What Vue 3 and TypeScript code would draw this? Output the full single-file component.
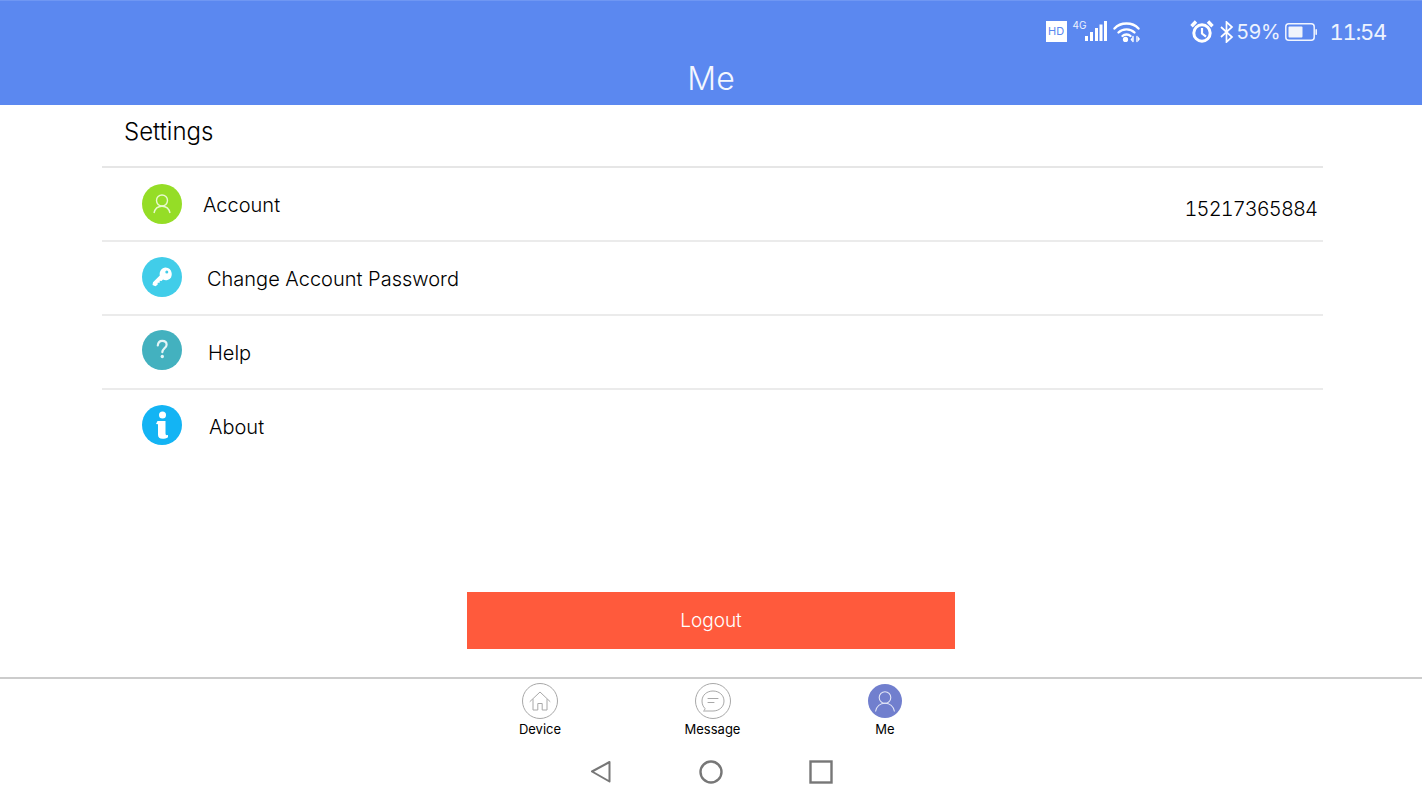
<script setup lang="ts">
interface Row { key: string; label: string; value?: string; color: string; inset: number; lift: number }
const rows: Row[] = [
  { key: 'account', label: 'Account', value: '15217365884', color: '#95dd26', inset: 21, lift: 0 },
  { key: 'password', label: 'Change Account Password', color: '#41cde9', inset: 25, lift: 3 },
  { key: 'help', label: 'Help', color: '#43b1bf', inset: 26, lift: 5 },
  { key: 'about', label: 'About', color: '#13b4f4', inset: 27, lift: 2 },
]
</script>

<template>
  <div class="page">
    <header class="top">
      <div class="status">
        <span class="hd">HD</span>
        <span class="net">4G</span>
        <svg class="signal" width="22" height="21" viewBox="0 0 22 21" fill="#fff">
          <rect x="0" y="15" width="3" height="5" /><rect x="5" y="11" width="3" height="9" />
          <rect x="10" y="7" width="3" height="13" /><rect x="14.500" y="3.500" width="3" height="16.500" />
          <rect x="19" y="0" width="3" height="20" />
        </svg>
        <svg class="wifi" width="28" height="22" viewBox="0 0 28 22" fill="none" stroke="#fff" stroke-width="2.400" stroke-linecap="round">
          <path d="M1.500 7.500C7.500 .8 19.500 .8 25.500 7.500" />
          <path d="M5.500 11.500C9.500 7.300 17.500 7.300 21.500 11.500" />
          <path d="M9.500 15C11.500 13 15.500 13 17.500 15" />
          <circle cx="12.500" cy="18.400" r="2.600" fill="#fff" stroke="none" />
          <path d="M20 15.500v5M24 15.500v5" stroke-width="1.400" />
          <path d="M17.500 18.500l2-2.400v4.800zM27 18l-2-2.400v4.800z" fill="#fff" stroke="none" />
        </svg>
        <svg class="alarm" width="24" height="23" viewBox="0 0 24 23" fill="none" stroke="#fff" stroke-width="3">
          <circle cx="12" cy="13" r="8.200" />
          <path d="M12 8v5.500l4 3.200" stroke-width="2.200" />
          <path d="M1.500 6.200 6 1.500M22.500 6.200 18 1.500" stroke-width="3.400" />
        </svg>
        <svg class="bt" width="14" height="22" viewBox="0 0 14 22" fill="none" stroke="#fff" stroke-width="1.700">
          <path d="M1 6 12 16 6.500 21V1L12 6 1 16" />
        </svg>
        <span class="pct">59%</span>
        <svg class="battery" width="32" height="18" viewBox="0 0 32 18">
          <rect x=".8" y=".8" width="28.400" height="16.400" rx="3" fill="none" stroke="#f1f5fe" stroke-width="1.500" />
          <rect x="3.500" y="3.500" width="14" height="11" rx="1" fill="#f1f4fb" />
          <rect x="30.400" y="6" width="1.600" height="6" rx=".8" fill="#f1f5fe" />
        </svg>
        <span class="time">11:54</span>
      </div>
      <h1 class="title">Me</h1>
    </header>

    <main class="content">
      <section class="settings">
        <h2 class="heading">Settings</h2>
        <div v-for="row in rows" :key="row.key" class="row">
          <span class="badge" :style="{ background: row.color, marginBottom: row.lift + 'px' }">
            <svg v-if="row.key === 'account'" width="24" height="24" viewBox="0 0 24 24" fill="none" stroke="#e9f9cf" stroke-width="1.400">
              <circle cx="12" cy="8.500" r="5.500" />
              <path d="M4 21C5 16.500 8.200 14.300 12 14.300s7 2.200 8 6.700" />
            </svg>
            <svg v-else-if="row.key === 'password'" width="24" height="24" viewBox="0 0 24 24">
              <path fill="#fff" fill-rule="evenodd" d="M15.500 2.500a6.500 6.500 0 0 1 2 12.600c-1.700.5-3.300.2-4.500-.6L11.500 15.900 9.700 15.800 9.700 17.800 7.700 17.800 7.600 19.800 5.400 21.200 2.500 20 3 17.200 9.800 10.500C9 6.500 11.800 2.500 15.500 2.500Zm1.300 3a1.500 1.500 0 1 0 0 3 1.500 1.500 0 0 0 0-3Z" />
            </svg>
            <svg v-else-if="row.key === 'help'" width="24" height="24" viewBox="0 0 24 24" fill="none" stroke="#e4f5f7" stroke-width="2.200" stroke-linecap="round">
              <path d="M7.800 7.500C8.100 4 10 2.800 12.200 2.800c2.600 0 4.400 1.600 4.400 3.900 0 3.200-4 3.500-4.300 7.500" />
              <circle cx="12.300" cy="18.500" r="1.700" fill="#e4f5f7" stroke="none" />
            </svg>
            <svg v-else width="24" height="30" viewBox="0 0 24 30" fill="#fff">
              <circle cx="12.500" cy="5" r="3.500" />
              <path d="M7.500 11h8v12c0 2 .8 2.400 2.500 2v2.300c-1.500 1-3.500 1.500-5.500 1.500-3 0-4.500-1.500-4.500-4V14.300L6 14Z" />
            </svg>
          </span>
          <span class="label" :style="{ marginLeft: row.inset + 'px' }">{{ row.label }}</span>
          <span v-if="row.value" class="value">{{ row.value }}</span>
        </div>
      </section>
      <button class="logout" type="button">Logout</button>
    </main>

    <nav class="tabs">
      <div class="tab">
        <span class="ring">
          <svg width="24" height="24" viewBox="0 0 24 24" fill="none" stroke="#a8a8a8" stroke-width="1">
            <path d="M2 12.500 12 3l10 9.500M5 10.500V21h4.800v-6.500h4.400V21H19V10.500" stroke-linejoin="round" stroke-linecap="round" />
          </svg>
        </span>
        <span class="tab-label">Device</span>
      </div>
      <div class="tab">
        <span class="ring">
          <svg width="24" height="24" viewBox="0 0 24 24" fill="none" stroke="#a8a8a8" stroke-width="1">
            <path d="M4 19.500c-2-2-3-4.500-3-7.500C1 6 6 2 12 2s11 4 11 10-5 10-11 10H2.500c1-.6 1.500-1.400 1.500-2.500Z" />
            <path d="M7 9.500h10M7 13.500h6" stroke-linecap="round" />
          </svg>
        </span>
        <span class="tab-label">Message</span>
      </div>
      <div class="tab">
        <span class="ring active">
          <svg width="22" height="24" viewBox="0 0 22 24" fill="none" stroke="#e3e6f6" stroke-width="1.100">
            <circle cx="11" cy="8.500" r="5.800" />
            <path d="M1.500 22.500C2.500 17.500 6.300 14.300 11 14.300s8.500 3.200 9.500 8.200" />
          </svg>
        </span>
        <span class="tab-label">Me</span>
      </div>
    </nav>

    <footer class="nav">
      <span class="nav-slot">
        <svg width="22" height="23" viewBox="0 0 22 23" fill="none" stroke="#777" stroke-width="2" stroke-linejoin="round">
          <path d="M19.500 2 2 11.500l17.500 10Z" />
        </svg>
      </span>
      <span class="nav-slot">
        <svg width="24" height="24" viewBox="0 0 24 24" fill="none" stroke="#777" stroke-width="2.400">
          <circle cx="12" cy="12" r="10.500" />
        </svg>
      </span>
      <span class="nav-slot">
        <svg width="24" height="24" viewBox="0 0 24 24" fill="none" stroke="#777" stroke-width="2.400">
          <rect x="1.500" y="1.500" width="21" height="21" />
        </svg>
      </span>
    </footer>
  </div>
</template>

<style>
html, body { margin: 0; background: #fff; }
</style>

<style scoped>
.page {
  width: 1422px;
  height: 800px;
  display: flex;
  flex-direction: column;
  overflow: hidden;
  background: #fff;
  font-family: Inter, "Liberation Sans", Arial, sans-serif;
  font-weight: 300;
  color: #000;
}
.top {
  height: 105px;
  box-sizing: border-box;
  background: #5b88f0;
  border-top: 1px solid #6f97f3;
  color: #fff;
  padding-top: 19px;
  flex: none;
}
.status {
  height: 23px;
  display: flex;
  align-items: center;
  justify-content: flex-end;
  padding-right: 36px;
  color: #eef3fe;
}
.hd {
  width: 21px;
  height: 21px;
  background: #fff;
  color: #5b88f0;
  font-size: 11px;
  font-weight: 400;
  line-height: 21px;
  text-align: center;
}
.net {
  font-size: 10px;
  font-weight: 400;
  width: 12px;
  margin-left: 6px;
  align-self: flex-start;
  line-height: 10px;
}
.signal { margin-left: 0; }
.wifi { margin-left: 6px; }
.alarm { margin-left: 49px; }
.bt { margin-left: 6px; }
.pct { font-size: 20px; font-weight: 400; margin-left: 3px; width: 44px; }
.battery { margin-left: 4px; }
.time {
  font-size: 22px;
  font-weight: 400;
  margin-left: 13px;
  font-variant-numeric: tabular-nums;
  letter-spacing: -1.300px;
}
.title {
  margin: 17px 0 0;
  font-size: 32px;
  font-weight: 300;
  line-height: 38px;
  text-align: center;
  color: #f4f7fe;
}
.content {
  flex: 1;
  min-height: 0;
  display: flex;
  flex-direction: column;
  align-items: center;
  border-bottom: 2px solid #ccc;
}
.settings {
  width: 1221px;
  margin-left: 3px;
}
.heading {
  margin: 0;
  height: 63px;
  box-sizing: border-box;
  padding: 11px 0 0 22px;
  font-size: 24px;
  font-weight: 300;
  line-height: 32px;
  border-bottom: 2px solid #e6e6e6;
}
.row {
  height: 72px;
  display: flex;
  align-items: center;
  padding: 0 6px 0 40px;
  border-bottom: 2px solid #ebebeb;
  font-size: 20px;
}
.row:last-child { border-bottom: 0; }
.badge {
  width: 40px;
  height: 40px;
  border-radius: 50%;
  display: flex;
  align-items: center;
  justify-content: center;
  flex: none;
}
.label { padding-top: 2px; }
.value {
  margin-left: auto;
  padding-top: 9px;
  font-variant-numeric: tabular-nums;
  letter-spacing: -.9px;
}
.logout {
  width: 488px;
  height: 57px;
  margin-top: auto;
  margin-bottom: 28px;
  border: 0;
  background: #ff5a3c;
  color: #fff;
  font: 300 19px Inter, "Liberation Sans", Arial, sans-serif;
}
.tabs {
  flex: none;
  height: 64px;
  display: flex;
  justify-content: center;
  padding-left: 3px;
}
.tab {
  width: 172.500px;
  display: flex;
  flex-direction: column;
  align-items: center;
  padding-top: 4px;
}
.ring {
  width: 34px;
  height: 34px;
  border: 1px solid #a8a8a8;
  border-radius: 50%;
  display: flex;
  align-items: center;
  justify-content: center;
}
.ring.active { background: #717fce; border: 0; padding: 0; margin: 1px; }
.tab-label { font-size: 13px; font-weight: 400; line-height: 16px; margin-top: 2px; }
.nav {
  flex: none;
  height: 57px;
  display: flex;
  justify-content: center;
  padding-top: 17px;
  box-sizing: border-box;
  padding-right: 1px;
}
.nav-slot {
  width: 110px;
  height: 24px;
  display: flex;
  justify-content: center;
}
</style>
